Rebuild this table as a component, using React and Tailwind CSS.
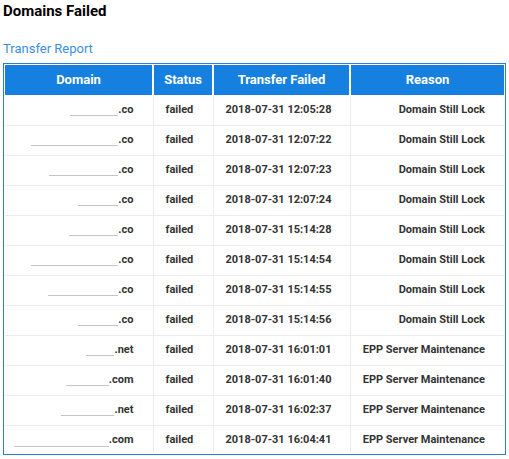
const rows = [
  [48, ".co", "2018-07-31 12:05:28", "Domain Still Lock"],
  [87, ".co", "2018-07-31 12:07:22", "Domain Still Lock"],
  [69, ".co", "2018-07-31 12:07:23", "Domain Still Lock"],
  [40, ".co", "2018-07-31 12:07:24", "Domain Still Lock"],
  [49, ".co", "2018-07-31 15:14:28", "Domain Still Lock"],
  [87, ".co", "2018-07-31 15:14:54", "Domain Still Lock"],
  [70, ".co", "2018-07-31 15:14:55", "Domain Still Lock"],
  [40, ".co", "2018-07-31 15:14:56", "Domain Still Lock"],
  [28, ".net", "2018-07-31 16:01:01", "EPP Server Maintenance"],
  [43, ".com", "2018-07-31 16:01:40", "EPP Server Maintenance"],
  [53, ".net", "2018-07-31 16:02:37", "EPP Server Maintenance"],
  [95, ".com", "2018-07-31 16:04:41", "EPP Server Maintenance"],
];

export default function App() {
  return (
    <div className="w-[509px] h-[459px] bg-white px-[3px] pt-[1px]" style={{ fontFamily: "Roboto, 'Liberation Sans', sans-serif" }}>
      <div className="text-[15px] font-bold leading-[20px] text-black">Domains Failed</div>
      <div className="mt-[20px] text-[13px] leading-[16px] text-[#3a8ee6]">Transfer Report</div>
      <div className="mt-[6px] w-[503px] border border-[#2a7fd6] p-px">
        <table className="w-full border-collapse table-fixed">
          <colgroup>
            <col className="w-[148px]" />
            <col className="w-[60px]" />
            <col className="w-[137px]" />
            <col />
          </colgroup>
          <thead>
            <tr className="h-[30px]">
              {["Domain", "Status", "Transfer Failed", "Reason"].map((h) => (
                <th key={h} className="bg-[#1680e0] border-x-2 border-b border-white first:border-l-0 last:border-r-0 text-white text-[13px] font-bold text-center p-0">
                  {h}
                </th>
              ))}
            </tr>
          </thead>
          <tbody>
            {rows.map((r, i) => {
              const last = i === rows.length - 1;
              const rowCls = last ? "h-[28px] [&>td]:border-b-0 [&>td]:pt-[2px]" : "h-[30px]";
              return (
                <tr key={i} className={rowCls}>
                  <td className="border border-[#ececec] border-l-0 p-0 pr-[19px] text-right text-[11px] font-bold text-[#333]">
                    <span className="inline-flex items-baseline">
                      <span className="inline-block h-px bg-[#c4c4c4] self-end mb-[2px]" style={{ width: r[0] }} />
                      <span>{r[1]}</span>
                    </span>
                  </td>
                  <td className="border border-[#ececec] p-0 pl-[12px] text-left text-[11px] font-bold text-[#333]">failed</td>
                  <td className="border border-[#ececec] p-0 pl-[12px] text-left text-[11px] font-bold text-[#333]">{r[2]}</td>
                  <td className="border border-[#ececec] border-r-0 p-0 pr-[19px] text-right text-[11px] font-bold text-[#333]">{r[3]}</td>
                </tr>
              );
            })}
          </tbody>
        </table>
      </div>
    </div>
  );
}
